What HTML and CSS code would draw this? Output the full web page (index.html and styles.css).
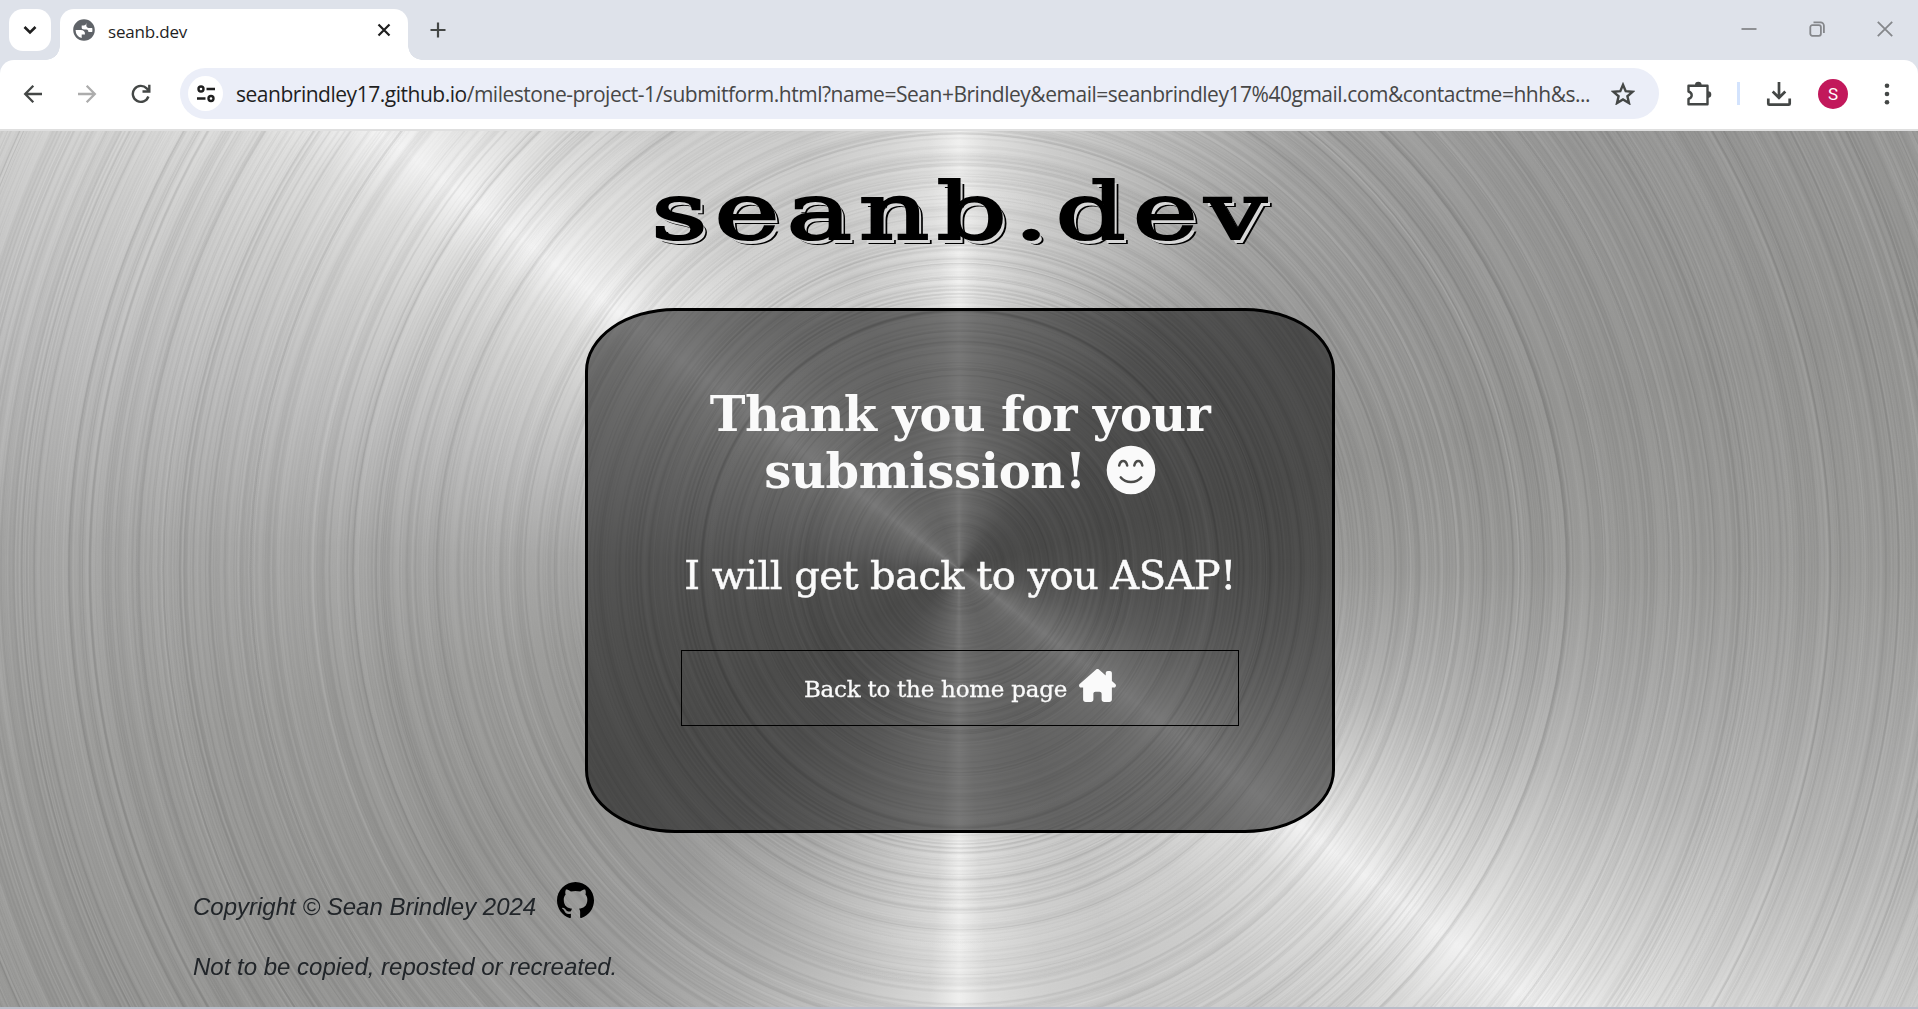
FILE: index.html
```html
<!DOCTYPE html>
<html lang="en">
<head>
<meta charset="utf-8">
<title>seanb.dev</title>
<link rel="stylesheet" href="styles.css">
</head>
<body>
<div class="browser">
  <div class="tabstrip">
    <div class="tab-search"><svg width="42" height="42" viewBox="0 0 42 42"><path d="M15.500 18l5.500 5.500L26.500 18" fill="none" stroke="#1f1f1f" stroke-width="2.600"/></svg></div>
    <div class="tab">
      <svg class="globe" width="24" height="24" viewBox="0 0 24 24"><path fill="#5f6368" d="M12 1.200C6 1.200 1.200 6 1.200 12S6 22.800 12 22.800 22.800 18 22.800 12 18 1.200 12 1.200zM3.600 12h5c3.100.02 4.600 1.500 4.400 4.600H9.700v3.500A8.500 8.500 0 0 1 3.600 12zm10.800-8c0 3-1.400 3.600-4.700 3.600v2.300c0 1.500 1.700 1.500 4.800 1.500 1.200 0 1.900 1.200 1.900 2.500h3.800A8.500 8.500 0 0 0 20.200 10h-3.400c-1.300 0-2.500-1.100-2.500-2.500z" fill-rule="evenodd"/></svg>
      <span class="tab-title">seanb.dev</span>
      <svg width="18" height="18" viewBox="0 0 18 18"><path d="M3.500 3.500l11 11M14.500 3.500l-11 11" stroke="#1f1f1f" stroke-width="2.200"/></svg>
    </div>
    <svg class="new-tab" width="18" height="18" viewBox="0 0 18 18"><path d="M9 1.500v15M1.500 9h15" stroke="#444746" stroke-width="2.200"/></svg>
    <div class="window-buttons">
      <svg width="18" height="18" viewBox="0 0 18 18"><path d="M1.500 9h15" stroke="#85878b" stroke-width="1.800"/></svg>
      <svg width="18" height="18" viewBox="0 0 18 18" fill="none" stroke="#85878b" stroke-width="1.800"><rect x="2.300" y="5.200" width="10.600" height="10.600" rx="2"/><path d="M5.500 2.300h7a3.400 3.400 0 0 1 3.400 3.400v7.200"/></svg>
      <svg width="18" height="18" viewBox="0 0 18 18"><path d="M1.800 1.800l14.400 14.400M16.200 1.800L1.800 16.200" stroke="#85878b" stroke-width="1.800"/></svg>
    </div>
  </div>
  <div class="toolbar">
    <span class="tool"><svg width="20" height="20" viewBox="0 0 20 20" fill="none" stroke="#444746" stroke-width="2.300"><path d="M19 10H2.500M10.300 1.800L2.200 10l8.100 8.200"/></svg></span>
    <span class="tool"><svg width="20" height="20" viewBox="0 0 20 20" fill="none" stroke="#acacac" stroke-width="2.300"><path d="M1 10h16.500M9.700 1.800l8.100 8.200-8.100 8.200"/></svg></span>
    <span class="tool"><svg width="20" height="20" viewBox="0 0 20 20" fill="none" stroke="#444746" stroke-width="2.400"><path d="M17.400 12.500a8 8 0 1 1-1.700-8.100L18 6.700M18.300.8v6.700h-6.800"/></svg></span>
    <div class="omnibox">
      <span class="site-info"><svg width="20" height="18" viewBox="0 0 20 18" fill="none" stroke="#1f1f1f" stroke-width="2.400"><circle cx="5" cy="4" r="2.500"/><path d="M10.500 4H19M1 13.500h8.500"/><circle cx="15" cy="13.500" r="2.500"/></svg></span>
      <span class="url"><b>seanbrindley17.github.io</b>/milestone-project-1/submitform.html?name=Sean+Brindley&amp;email=seanbrindley17%40gmail.com&amp;contactme=hhh&amp;s...</span>
      <svg class="star" width="24" height="23" viewBox="0 0 24 23"><path d="M12 2.800l2.700 6.400 6.900.6-5.200 4.500 1.600 6.800-6-3.600-6 3.600 1.600-6.800-5.200-4.500 6.900-.6z" fill="none" stroke="#444746" stroke-width="2.400"/></svg>
    </div>
    <span class="tool"><svg width="28" height="28" viewBox="0 0 28 28"><path d="M4.500 5.700h19v18.500h-19v-5.200c4.300-1.500 4.300-6 0-7.500z" fill="none" stroke="#444746" stroke-width="2.400" stroke-linejoin="round"/><path d="M11 5a3.300 3.300 0 0 1 6.600 0zM24 11.300a3.300 3.300 0 0 1 0 6.600z" fill="#444746"/></svg></span>
    <span class="divider"></span>
    <span class="tool"><svg width="26" height="26" viewBox="0 0 26 26" fill="none" stroke="#444746" stroke-width="2.700"><path d="M13 1v15.500M6.700 10.500L13 16.800l6.300-6.300M2.300 17.500v5.200a1 1 0 0 0 1 1h19.400a1 1 0 0 0 1-1v-5.200"/></svg></span>
    <span class="tool"><span class="avatar">S</span></span>
    <span class="tool"><svg width="6" height="22" viewBox="0 0 6 22" fill="#444746"><circle cx="3" cy="2.700" r="2.300"/><circle cx="3" cy="11" r="2.300"/><circle cx="3" cy="19.300" r="2.300"/></svg></span>
  </div>
</div>
<div class="page">
  <canvas class="metal" width="1918" height="876"></canvas>
  <header class="title"><h1>seanb.dev</h1></header>
  <main class="card">
    <h2>Thank you for your<br><span class="sub">submission!</span><svg class="smile" width="50" height="50" viewBox="0 0 50 50"><circle cx="25" cy="25" r="24.300" fill="#fafafa"/><g fill="none" stroke="#4b4b49" stroke-linecap="round"><path d="M13.200 20.500c1.400-6 6.600-6 8 0M28.300 20.500c1.400-6 6.600-6 8 0" stroke-width="2.500"/><path d="M14.800 32.500c5 6 15.400 6 20.400 0" stroke-width="2.600"/></g></svg></h2>
    <p class="reply">I will get back to you ASAP!</p>
    <a class="home"><span>Back to the home page</span><svg width="37" height="33" viewBox="0 0 576 512"><path fill="#fafafa" d="M543.800 287.600c17 0 32-14 32-32.100c1-9-3-17-11-24L512 185V64c0-17.700-14.300-32-32-32H448c-17.700 0-32 14.300-32 32v36.700L309.500 7c-6-5-14-7-21-7s-15 1-22 8L10 231.500c-7 7-10 15-10 24c0 18 14 32.100 32 32.100h32v69.700V472c0 22.100 17.900 40 40 40h80c22.100 0 40-17.900 40-40V384c0-17.700 14.300-32 32-32h64c17.700 0 32 14.300 32 32v88c0 22.100 17.900 40 40 40h80c22.100 0 40-17.900 40-40l-.2-184.400h32z"/></svg></a>
  </main>
  <footer>
    <p><span class="copy">Copyright © Sean Brindley 2024</span><svg width="37" height="37" viewBox="0 0 16 16"><path d="M8 0C3.580 0 0 3.580 0 8c0 3.540 2.290 6.530 5.470 7.590.4.070.55-.17.55-.38 0-.19-.01-.82-.01-1.490-2.010.37-2.530-.49-2.690-.94-.09-.23-.48-.94-.82-1.130-.28-.15-.68-.52-.01-.53.63-.01 1.080.58 1.230.82.72 1.210 1.870.87 2.330.66.07-.52.28-.87.51-1.070-1.780-.2-3.640-.89-3.640-3.950 0-.87.31-1.590.82-2.150-.08-.2-.36-1.020.08-2.120 0 0 .67-.21 2.200.82.64-.18 1.320-.27 2-.27s1.360.09 2 .27c1.530-1.040 2.200-.82 2.200-.82.44 1.100.16 1.920.08 2.120.51.56.82 1.270.82 2.150 0 3.070-1.870 3.750-3.650 3.950.29.25.54.73.54 1.480 0 1.070-.01 1.930-.01 2.200 0 .21.15.46.55.38A8.010 8.010 0 0 0 16 8c0-4.420-3.580-8-8-8z"/></svg></p>
    <p class="notice">Not to be copied, reposted or recreated.</p>
  </footer>
</div>
<script src="metal.js"></script>
</body>
</html>
```
FILE: styles.css
```css
* { box-sizing: border-box; }
body { margin: 0; width: 1918px; height: 1009px; overflow: hidden; display: flex; flex-direction: column; background: #b9bdc8; }
svg { display: block; flex: none; }
h1, h2, p { margin: 0; }
.browser { flex: none; background: #dee2ea; font-family: "Open Sans", sans-serif; }
.tabstrip { height: 60px; display: flex; align-items: flex-start; padding: 9px 24px 0 9px; }
.tab-search { width: 42px; height: 42px; border-radius: 14px; background: #fff; }
.tab { position: relative; margin-left: 9px; width: 348px; height: 51px; padding: 0 15px 9px 12px; border-radius: 14px 14px 0 0; background: #fff; display: flex; align-items: center; }
.tab::before, .tab::after { content: ""; position: absolute; bottom: 0; width: 14px; height: 14px; }
.tab::before { right: 100%; background: radial-gradient(circle at 0 0, transparent 13.5px, #fff 14px); }
.tab::after { left: 100%; background: radial-gradient(circle at 100% 0, transparent 13.5px, #fff 14px); }
.tab-title { flex: 1; margin-left: 12px; padding-top: 3px; font-size: 17px; font-weight: 400; letter-spacing: -.2px; color: #1f1f1f; }
.new-tab { margin: 12px 0 0 21px; }
.window-buttons { margin: 11px 0 0 auto; display: flex; gap: 50px; }
.toolbar { height: 71px; padding: 0 4px 2px 6px; border-bottom: 2px solid #dfdfdf; background: #fff; border-radius: 14px 14px 0 0; display: flex; align-items: center; }
.tool { width: 54px; display: flex; justify-content: center; flex: none; }
.omnibox { width: 1479px; height: 51px; margin: 0 12px; padding: 0 24px 0 8px; border-radius: 26px; background: #ebeef8; display: flex; align-items: center; }
.site-info { flex: none; width: 35px; height: 35px; border-radius: 50%; background: #fff; display: flex; align-items: center; justify-content: center; }
.url { margin-left: 13px; font-size: 21px; letter-spacing: -.48px; color: #474747; white-space: nowrap; }
.url b { font-weight: 400; color: #1f1f1f; }
.star { margin-left: auto; }
.divider { width: 3px; height: 23px; margin: 0 12px; background: #d3e3fd; }
.avatar { width: 30px; height: 30px; border-radius: 50%; background: #c2185b; color: #fff; font: 17px/30px Roboto, sans-serif; text-align: center; }
.page { position: relative; height: 876px; display: flex; flex-direction: column; overflow: hidden; background: conic-gradient(#f0f0ef 0deg, #dfdfde 4deg, #cdcdcc 12deg, #bbbbba 24deg, #a2a2a1 40deg, #989897 55deg, #949492 75deg, #9b9b99 90deg, #a9a9a8 100deg, #b8b8b7 108deg, #cececd 116deg, #dfdfde 122deg, #f1f1f1 127deg, #dbdbda 134deg, #cdcdcc 145deg, #c8c8c7 158deg, #cfcfce 168deg, #dcdcdb 176deg, #efefee 180deg, #d8d8d7 184deg, #c4c4c3 194deg, #acacab 208deg, #9b9b9a 222deg, #959593 240deg, #9c9c9a 258deg, #a7a7a6 272deg, #bdbdbd 284deg, #d0d0cf 295deg, #dfdfde 302deg, #f3f3f3 307deg, #e1e1e0 314deg, #d0d0cf 325deg, #cbcbca 340deg, #d5d5d4 350deg, #e0e0df 356deg, #f0f0ef 360deg); }
.metal { position: absolute; inset: 0; }
.title { position: relative; height: 177px; padding: 31px 0 0 7px; text-align: center; }
.title h1 { font: 400 79px/100px "DejaVu Serif", serif; letter-spacing: 5px; color: #000; -webkit-text-stroke: 2.2px #000; text-shadow: 2.5px 3.5px 0 #d8d8d8, 3.7px 5px 0 #000; transform: scaleX(1.39); }
.card { position: relative; width: 750px; height: 525px; margin-left: 585px; border: 3px solid #000; border-radius: 12%; background: rgba(0, 0, 0, .5); color: #fafafa; font-family: "DejaVu Serif", serif; display: flex; flex-direction: column; align-items: center; padding-top: 75px; }
.card h2 { height: 116px; font-size: 48px; line-height: 57px; letter-spacing: -.7px; text-align: center; white-space: nowrap; }
.sub { letter-spacing: -.3px; }
.smile { display: inline-block; margin-left: 20px; vertical-align: -7px; }
.reply { margin-top: 48px; font-size: 40px; line-height: 50px; letter-spacing: -.55px; white-space: nowrap; -webkit-text-stroke: .5px #fafafa; }
.home { width: 558px; height: 76px; margin-top: 50px; border: 1px solid #000; display: flex; align-items: center; justify-content: center; gap: 12px; font-size: 23px; letter-spacing: -.25px; white-space: nowrap; -webkit-text-stroke: .3px #fafafa; }
.home span { padding-top: 2px; }
.home svg { margin-top: -5px; }
footer { position: relative; padding: 49px 0 0 193px; font: italic 24px/36px "Liberation Sans", Arial, sans-serif; color: #212529; }
footer p { display: flex; align-items: flex-start; }
.copy { padding-top: 7px; margin-right: 21px; }
.notice { padding-top: 24px; }
```
FILE: metal.js
```javascript
// Brushed steel: fine concentric scratches over the conic sheen.
const canvas = document.querySelector('.metal');
const ctx = canvas.getContext('2d');
let seed = 17;
const rand = () => {
  seed = (seed * 1664525 + 1013904223) % 4294967296;
  return seed / 4294967296;
};
const cx = 960, cy = 438;
const ring = (r, width, strength) => {
  const rgb = rand() > 0.5 ? '255,255,255' : '0,0,0';
  const sheen = ctx.createConicGradient(rand() * Math.PI * 2, cx, cy);
  const base = strength * (0.3 + rand() * 0.7);
  sheen.addColorStop(0, `rgba(${rgb},${base})`);
  sheen.addColorStop(0.25 + rand() * 0.4, `rgba(${rgb},${base * rand() * 0.5})`);
  sheen.addColorStop(1, `rgba(${rgb},${base})`);
  ctx.strokeStyle = sheen;
  ctx.lineWidth = width;
  ctx.beginPath();
  ctx.arc(cx, cy, r, 0, Math.PI * 2);
  ctx.stroke();
};
for (let r = 1; r < 1080; r += 1.1) ring(r, 0.8 + rand() * 1.2, 0.055);
for (let i = 0; i < 300; i++) ring(15 + rand() * 1060, 1 + rand() * 1.5, 0.085);
for (let i = 0; i < 110; i++) ring(15 + rand() * 1060, 4 + rand() * 8, 0.03);
```
